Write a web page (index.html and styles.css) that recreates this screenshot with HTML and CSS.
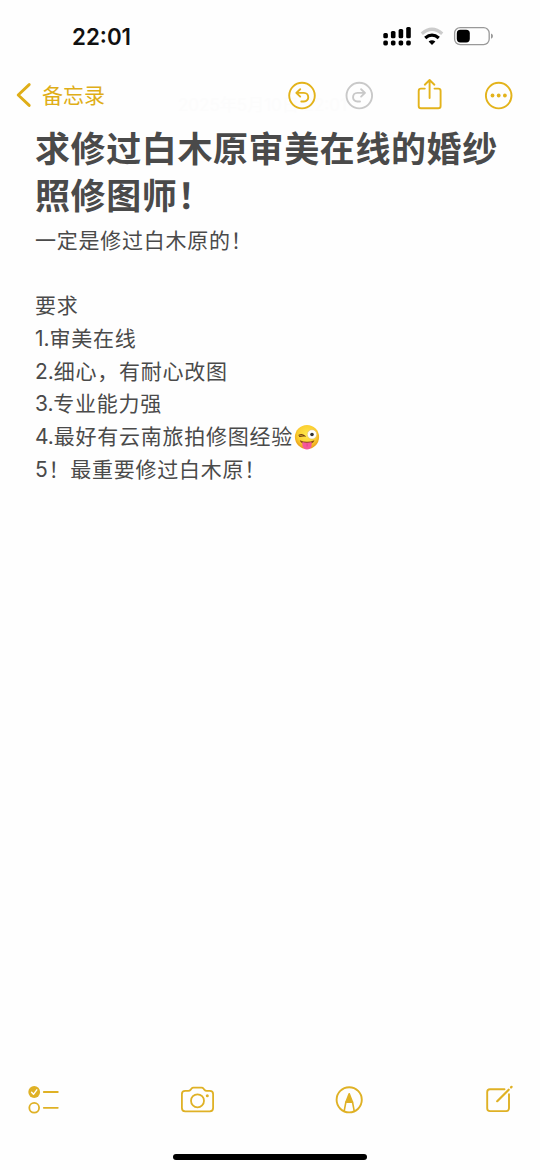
FILE: index.html
```html
<!DOCTYPE html>
<html lang="zh-CN">
<head>
<meta charset="utf-8">
<title>备忘录</title>
<link rel="stylesheet" href="styles.css">
</head>
<body>
<div class="screen">
  <header class="status">
    <span class="time">22:01</span>
    <svg class="status-icons" width="112" height="24" viewBox="382 24 112 24">
      <g fill="#000">
        <rect x="383.3" y="33" width="4.6" height="5.3" rx="1.5"/><rect x="390.9" y="31" width="4.6" height="7.3" rx="1.5"/><rect x="398.6" y="29" width="4.6" height="9.3" rx="1.5"/><rect x="406.2" y="27" width="4.6" height="11.3" rx="1.5"/>
        <rect x="383.3" y="40.5" width="4.6" height="4.9" rx="1.6"/><rect x="390.9" y="40.5" width="4.6" height="4.9" rx="1.6"/><rect x="398.6" y="40.5" width="4.6" height="4.9" rx="1.6"/><rect x="406.2" y="40.5" width="4.6" height="4.9" rx="1.6"/>
        <path d="M432 45 L428.6 41.6 Q432 38.9 435.4 41.6 Z"/>
      </g>
      <path d="M421.8 33.8 Q432 24.8 442.2 33.8" fill="none" stroke="#ccc" stroke-width="3.3"/>
      <path d="M425.2 38 Q432 32.2 438.8 38" fill="none" stroke="#000" stroke-width="3.2"/>
      <rect x="454.6" y="27.6" width="34.6" height="17" rx="5.6" fill="none" stroke="#999" stroke-width="1.3"/>
      <rect x="456.8" y="29.8" width="13" height="12.6" rx="3.6"/>
      <path d="M491 33.4 Q493 34.2 493 36.1 Q493 38 491 38.8Z" fill="#999"/>
    </svg>
  </header>
  <nav class="nav">
    <svg width="18" height="26" viewBox="15 82 18 26"><path d="M29.2 84.6 L18.2 95 L29.2 105.4" fill="none" stroke="#dfae18" stroke-width="2.9" stroke-linecap="round" stroke-linejoin="round"/></svg>
    <span class="back">备忘录</span>
    <span class="date">2025年5月10日 22:01</span>
    <svg class="actions" width="228" height="38" viewBox="286 76 228 38" fill="none" stroke="#e3b31b" stroke-width="1.9" stroke-linecap="round" stroke-linejoin="round">
      <circle cx="302" cy="95.6" r="12.8"/>
      <path d="M300.2 89.2 L296.3 92.9 L300.2 96.6 M296.8 92.9 H303.9 C309.6 92.9 309.8 101.5 303.9 101.5 H301.3"/>
      <g stroke="#c9c9c9"><circle cx="359.3" cy="95.6" r="12.8"/><path d="M361.1 89.2 L365 92.9 L361.1 96.6 M364.5 92.9 H357.4 C351.7 92.9 351.5 101.5 357.4 101.5 H360"/></g>
      <path d="M424.8 88.6 H421 Q418.7 88.6 418.7 90.9 V106 Q418.7 108.3 421 108.3 H438.3 Q440.6 108.3 440.6 106 V90.9 Q440.6 88.6 438.3 88.6 H434.5 M429.6 98 V80.3 M424.8 84.7 L429.6 80 L434.4 84.7"/>
      <circle cx="498.7" cy="95.6" r="12.8"/>
      <g fill="#e3b31b" stroke="none"><circle cx="492.5" cy="95.5" r="1.9"/><circle cx="498.7" cy="95.5" r="1.9"/><circle cx="504.9" cy="95.5" r="1.9"/></g>
    </svg>
  </nav>
  <main class="note">
    <h1 class="title">求修过白木原审美在线的婚纱<br>照修图师！</h1>
    <p class="line">一定是修过白木原的！</p>
    <p class="line blank"></p>
    <p class="line">要求</p>
    <p class="line"><span class="num">1.</span>审美在线</p>
    <p class="line"><span class="num">2.</span>细心，有耐心改图</p>
    <p class="line"><span class="num">3.</span>专业能力强</p>
    <p class="line emoji-line"><span><span class="num">4.</span>最好有云南旅拍修图经验</span><svg class="emoji" width="26" height="26" viewBox="0 0 26 26" role="img" aria-label="😜">
      <defs><radialGradient id="face" cx=".5" cy=".4" r=".6"><stop offset="0" stop-color="#ffe94a"/><stop offset=".65" stop-color="#fbcf32"/><stop offset="1" stop-color="#e99a17"/></radialGradient></defs>
      <circle cx="13" cy="13" r="12.1" fill="url(#face)"/>
      <path d="M5 11.2 Q8 9.4 10.6 12 Q8.2 11.6 5.6 12.5" fill="none" stroke="#713f12" stroke-width="1.1" stroke-linecap="round"/>
      <circle cx="18" cy="10.4" r="4.7" fill="#fff" stroke="#d8b36c" stroke-width=".5"/><circle cx="18" cy="10.5" r="1.8" fill="#333"/>
      <path d="M5.8 16.2 Q13 19.3 20.4 16.2 C19.4 21.6 7 21.6 5.8 16.2Z" fill="#8a4a15"/>
      <path d="M8.4 18 Q13 19.5 17.6 18 V21.5 C17.2 26.9 8.8 26.9 8.4 21.5Z" fill="#f4589a"/>
      <path d="M13.1 19.5 V22.5" stroke="#dc4486" stroke-width=".8"/>
    </svg></p>
    <p class="line">5！最重要修过白木原！</p>
  </main>
  <footer class="tools">
    <svg width="34" height="32" viewBox="27 1084 34 32" fill="none" stroke="#dfb125" stroke-width="1.8" stroke-linecap="round" stroke-linejoin="round">
      <circle cx="34.2" cy="1092" r="5.9" fill="#dfb125" stroke="none"/><path d="M31.6 1092.3 L33.5 1094.3 L36.8 1089.8" stroke="#fff" stroke-width="1.4"/>
      <circle cx="34.2" cy="1107.8" r="4.9"/><path d="M43.8 1092 H57.8 M43.8 1107.8 H57.8"/>
    </svg>
    <svg class="camera" width="36" height="32" viewBox="180 1084 36 32" fill="none" stroke="#dfb125" stroke-width="1.8" stroke-linecap="round" stroke-linejoin="round">
      <path d="M185.2 1090.8 H188.2 Q189.8 1090.8 190.7 1089.6 L191.4 1088.7 Q192.2 1087.7 193.5 1087.7 H201.5 Q202.8 1087.7 203.6 1088.7 L204.3 1089.6 Q205.2 1090.8 206.8 1090.8 H209.8 Q213.1 1090.8 213.1 1094.1 V1108 Q213.1 1111.3 209.8 1111.3 H185.2 Q181.9 1111.3 181.9 1108 V1094.1 Q181.9 1090.8 185.2 1090.8Z"/><circle cx="197.5" cy="1100.8" r="6.5"/><circle cx="207.3" cy="1095.8" r="1.5" fill="#dfb125" stroke="none"/>
    </svg>
    <svg class="markup" width="32" height="32" viewBox="333 1084 32 32" fill="none" stroke="#dfb125" stroke-width="1.9" stroke-linecap="round" stroke-linejoin="round">
      <circle cx="349.2" cy="1099.8" r="12.6"/><path d="M344.2 1110.8 L345.9 1102 H352.5 L354.2 1110.8" stroke-width="1.6"/><path d="M349.2 1094 L352.3 1102 H346.1Z" fill="#dfb125"/>
    </svg>
    <svg class="compose" width="32" height="32" viewBox="484 1084 32 32" fill="none" stroke="#dfb125" stroke-width="1.9" stroke-linecap="round" stroke-linejoin="round">
      <path d="M504.5 1089.3 H490 Q487.2 1089.3 487.2 1092.1 V1108.3 Q487.2 1111.1 490 1111.1 H506.2 Q509 1111.1 509 1108.3 V1094.2"/><path d="M497.2 1101.2 L508.7 1089.7" stroke-width="2.2"/><path d="M511.1 1087.3 L511.5 1086.9" stroke-width="2.4"/>
    </svg>
  </footer>
  <div class="home"></div>
</div>
</body>
</html>
```
FILE: styles.css
```css
* { box-sizing: border-box; }
body { margin: 0; background: #fefefe; font-family: Inter, "Noto Sans CJK SC", sans-serif; color: #4a4a4a; }
.screen { width: 540px; height: 1170px; display: flex; flex-direction: column; overflow: hidden; background: #fefefe; }
.status { height: 74px; padding: 24px 46px 0 72px; display: flex; justify-content: space-between; align-items: flex-start; }
.time { font-size: 22.3px; line-height: 26px; font-weight: 600; color: #111; }
.status-icons { display: block; }
.nav { position: relative; height: 42px; padding: 0 26px 0 15px; display: flex; align-items: center; }
.back { margin-left: 9px; padding-top: 2px; font-size: 21px; line-height: 30px; color: #dfae18; }
.date { position: absolute; left: 178px; top: 20px; font-size: 17px; line-height: 22px; color: #fcfcfc; white-space: nowrap; }
.actions { position: relative; display: block; margin-left: auto; }
.note { flex: 1; padding: 10px 36px 0 35px; }
.title { margin: 0 -20px 5px 0; font-size: 35px; line-height: 47px; letter-spacing: .6px; font-weight: 600; white-space: nowrap; }
.line { margin: 0; height: 32.7px; font-size: 21px; line-height: 32.7px; letter-spacing: .75px; white-space: nowrap; }
.num { letter-spacing: -.1px; }
.emoji-line { display: flex; align-items: center; }
.emoji { margin-left: 1px; }
.tools { height: 70px; padding: 0 24px 0 27px; display: flex; align-items: flex-start; }
.camera { margin-left: 119px; }
.markup { margin-left: 117px; }
.compose { margin-left: 119px; }
.home { width: 194px; height: 6px; margin: 0 auto 10px; border-radius: 3px; background: #000; }
```
